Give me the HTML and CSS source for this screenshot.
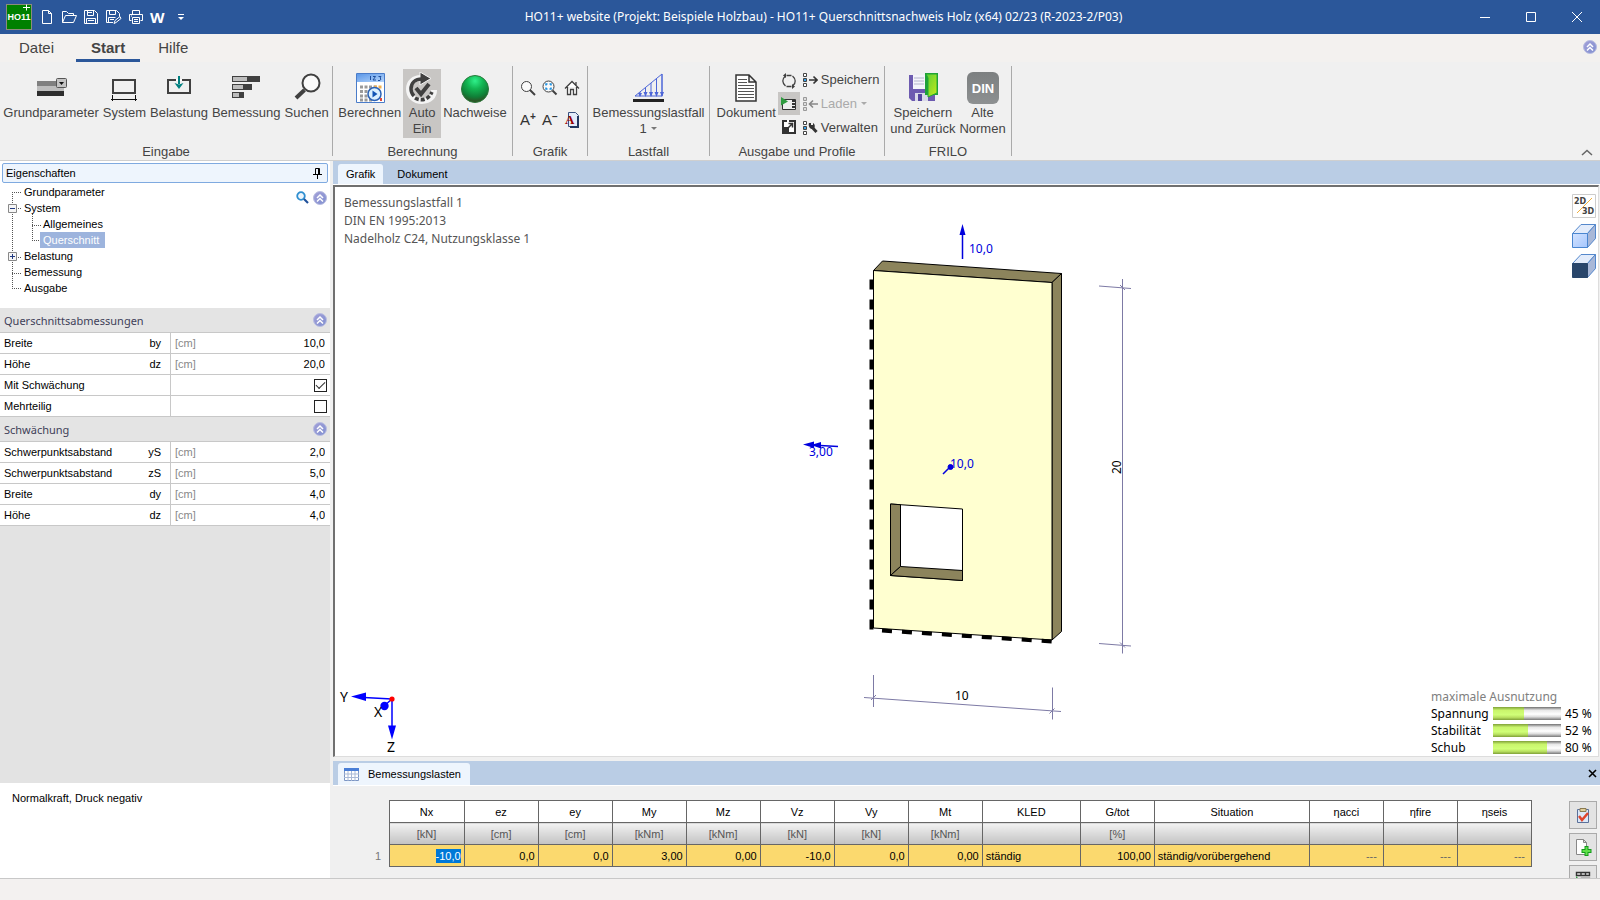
FILE: index.html
```html
<!DOCTYPE html>
<html lang="de">
<head>
<meta charset="utf-8">
<title>HO11+ Querschnittsnachweis Holz</title>
<link rel="stylesheet" href="styles.css">
</head>
<body>
<svg class="defs" aria-hidden="true">
  <defs>
    <linearGradient id="g-chev" x1="0" y1="0" x2="1" y2="1"><stop offset="0" stop-color="#a3a0d8"/><stop offset="1" stop-color="#7f8fd0"/></linearGradient>
    <radialGradient id="g-ball" cx=".5" cy=".2" r=".85"><stop offset="0" stop-color="#2ff08a"/><stop offset=".35" stop-color="#12b552"/><stop offset=".7" stop-color="#107f37"/><stop offset="1" stop-color="#3c3a1c"/></radialGradient>
    <linearGradient id="g-sky" x1="0" y1="0" x2="1" y2="1"><stop offset="0" stop-color="#5b97e8"/><stop offset="1" stop-color="#b5d5fb"/></linearGradient>
    <linearGradient id="g-cube" x1="0" y1="0" x2="1" y2="1"><stop offset="0" stop-color="#d3e3ff"/><stop offset="1" stop-color="#a5c6fd"/></linearGradient>
    <linearGradient id="g-din" x1="0" y1="0" x2="0" y2="1"><stop offset="0" stop-color="#7c7f80"/><stop offset="1" stop-color="#8d9091"/></linearGradient>
    <linearGradient id="g-door" x1="0" y1="0" x2="1" y2="1"><stop offset="0" stop-color="#58cf35"/><stop offset="1" stop-color="#c8ea1c"/></linearGradient>
    <symbol id="chev" viewBox="0 0 14 14">
      <circle cx="7" cy="7" r="6.5" fill="url(#g-chev)" stroke="#b9bde0"/>
      <path d="M4 7 7 4l3 3M4 10.5l3-3 3 3" fill="none" stroke="#fff" stroke-width="1.5"/>
    </symbol>
    <symbol id="list" viewBox="0 0 5 14">
      <path d="M.5.5h3v3h-3zM.5 10.5h3v3h-3z" fill="#fff" stroke="#444"/><path d="M.5 5.5h3v3h-3z" fill="#35a0e8" stroke="#444"/>
    </symbol>
  </defs>
</svg>

<header class="titlebar">
  <div class="quick">
    <svg class="logo" width="26" height="26" viewBox="0 0 26 26"><rect x=".5" y=".5" width="25" height="25" fill="#008000" stroke="#8c8c7c"/><text x="13" y="16" text-anchor="middle">HO11</text><path d="M17 3.500h7M20.500 0.500v6" stroke="#fff"/></svg>
    <button aria-label="Neu"><svg width="16" height="16" viewBox="0 0 16 16"><path d="M3.500 1.500h6l3 3v10h-9zM9.500 1.500v3h3"/></svg></button>
    <button aria-label="Öffnen"><svg width="16" height="16" viewBox="0 0 16 16"><path d="M1.500 13.500v-11h4l2 2h5v2M1.500 13.500l3-7h11l-3 7z"/></svg></button>
    <button aria-label="Speichern"><svg width="16" height="16" viewBox="0 0 16 16"><path d="M1.500 1.500h10l3 3v10h-13zM4.500 1.500v5h6v-5M3.500 14.500v-5h9v5M5 11.500h6M5 3.500h4"/></svg></button>
    <button aria-label="Speichern unter"><svg width="17" height="16" viewBox="0 0 17 16"><path d="M8 13.500H1.500v-12h10l3 3v3M4.500 1.500v4h6v-4M3.500 13.500v-5h7M5 10.500h4M9 14.500l1-3 5-4 1 2-5 4z"/></svg></button>
    <button aria-label="Drucken"><svg width="16" height="16" viewBox="0 0 16 16"><path d="M4.500 5.500v-4h7v4M3.500 11.500h-2v-6h13v6h-2M4.500 8.500h7v6h-7zM6 10.500h4M6 12.500h4M3 7h1"/></svg></button>
    <button class="word">W</button>
    <button class="more" aria-label="Anpassen"><svg width="8" height="8" viewBox="0 0 8 8"><path d="M1 1.500h6"/><path d="M1 4h6L4 7z" fill="#fff" stroke="none"/></svg></button>
  </div>
  <h1>HO11+ website (Projekt: Beispiele Holzbau) - HO11+ Querschnittsnachweis Holz (x64) 02/23 (R-2023-2/P03)</h1>
  <div class="winbtns">
    <button aria-label="Minimieren"><svg width="12" height="12" viewBox="0 0 12 12"><path d="M1 6.500h10"/></svg></button>
    <button aria-label="Maximieren"><svg width="12" height="12" viewBox="0 0 12 12"><path d="M1.500 1.500h9v9h-9z"/></svg></button>
    <button aria-label="Schließen"><svg width="12" height="12" viewBox="0 0 12 12"><path d="M1 1l10 10M11 1 1 11"/></svg></button>
  </div>
</header>

<nav class="menu">
  <button>Datei</button><button class="active">Start</button><button>Hilfe</button>
  <button class="help" aria-label="Einklappen"><svg width="14" height="14"><use href="#chev"/></svg></button>
</nav>

<section class="ribbon">
  <div class="group g-input">
    <div class="tools">
      <button class="tool"><svg width="32" height="32" viewBox="0 0 32 32"><path fill="#808080" d="M2 9h19v5H2z"/><path fill="#bdbdbd" d="M2 14h27v5H2z"/><path fill="#2e2e2e" d="M2 19h27v5H2z"/><rect x="21.500" y="6.500" width="10" height="9" rx="1" fill="#c4c4c4" stroke="#555"/><path d="M24 10h5l-2.500 3z" fill="#111"/></svg><span>Grundparameter</span></button>
      <button class="tool"><svg width="32" height="32" viewBox="0 0 32 32"><path fill="none" stroke="#404040" stroke-width="2" d="M5 8h22v13H5z"/><path stroke="#111" d="M3 27.500h26M4.500 23v6M27.500 23v6"/></svg><span>System</span></button>
      <button class="tool"><svg width="32" height="32" viewBox="0 0 32 32"><path fill="none" stroke="#404040" stroke-width="2" d="M5 8h22v13H5z"/><path fill="#fff" d="M13 7h6v2h-6z"/><path d="M16 4v8" stroke="#008080" stroke-width="2"/><path fill="#008080" d="M11.500 11 16 12.500 20.500 11 16 17z"/></svg><span>Belastung</span></button>
      <button class="tool"><svg width="32" height="32" viewBox="0 0 32 32"><path fill="#404040" d="M2 4h28v6H2zM2 12h20v6H2zM2 20h12v6H2z"/><path fill="#bdbdbd" d="M3 5h14v4H3zM3 13h10v4H3zM3 21h6v4H3z"/></svg><span>Bemessung</span></button>
      <button class="tool"><svg width="32" height="32" viewBox="0 0 32 32"><circle cx="20" cy="11" r="8.500" fill="#fafafa" stroke="#404040" stroke-width="2"/><path d="M13.500 18 5 26" stroke="#404040" stroke-width="4"/></svg><span>Suchen</span></button>
    </div>
    <h2>Eingabe</h2>
  </div>
  <div class="group g-calc">
    <div class="tools">
      <button class="tool"><svg width="32" height="32" viewBox="0 0 32 32"><path fill="#fff" stroke="#4a7cc9" d="M2.500 1.500h28v29h-28z"/><path fill="url(#g-sky)" d="M3 2h27v8H3z"/><path d="M16.500 4v4M19 4.500h2.500L19 8h3M24.500 4.500H27L26 6l1 1-1 1.500h-2" fill="none" stroke="#1e4f9e"/><path d="M6 15h17M6 19.500h11M6 24h11M6 28h13" stroke="#9a9a9a" stroke-width="3" stroke-dasharray="3 1.500"/><path d="M20 15h8" stroke="#f0b050" stroke-width="3" stroke-dasharray="3 1.500"/><circle cx="20.500" cy="22" r="6.500" fill="#d9f0ff" stroke="#2c62b5" stroke-width="1.500"/><path fill="#1155b5" d="M18.500 18.500v7l5-3.500z"/><path fill="#e04a3a" d="M26 26h2v3h-2z"/></svg><span>Berechnen</span></button>
      <button class="tool pressed"><svg width="32" height="32" viewBox="0 0 32 32"><path d="M15 6c-7 0-12 4-12 11s5 12 13 12 12-5 12-11" fill="none" stroke="#f4f4f4" stroke-width="6"/><path d="M14 0l11 6.500L14 13z" fill="#404040" stroke="#f4f4f4"/><path d="M16 7C9 7 5 11 5 17c0 3 1 5 3 7" fill="none" stroke="#404040" stroke-width="3.500"/><path d="M9 26c5 3 13 3 17-6" fill="none" stroke="#404040" stroke-width="3.500" stroke-dasharray="4 2"/><path d="M10 16l5 6 8-10" fill="none" stroke="#404040" stroke-width="4"/></svg><span>Auto<br>Ein</span></button>
      <button class="tool"><svg width="32" height="32" viewBox="0 0 32 32"><circle cx="16" cy="17" r="13.500" fill="url(#g-ball)" stroke="#2b7a3d"/></svg><span>Nachweise</span></button>
    </div>
    <h2>Berechnung</h2>
  </div>
  <div class="group g-graf">
    <div class="tools icons">
      <button aria-label="Zoom"><svg width="16" height="16" viewBox="0 0 16 16"><circle cx="6.500" cy="6.500" r="5" fill="#fafafa" stroke="#404040"/><path d="m10 10 5 5" stroke="#404040" stroke-width="2"/></svg></button>
      <button aria-label="Zoom Auswahl"><svg width="16" height="16" viewBox="0 0 16 16"><circle cx="6.500" cy="6.500" r="5.500" fill="#fafafa" stroke="#404040"/><path d="m10.500 10.500 4 4" stroke="#404040" stroke-width="2"/><path d="M4 5.500V4h1.500M7.500 4H9v1.500M9 7.500V9H7.500M5.500 9H4V7.500" fill="none" stroke="#188ee0" stroke-width="1.500"/></svg></button>
      <button aria-label="Gesamtansicht"><svg width="16" height="16" viewBox="0 0 16 16"><path d="M1 8.500 8 1.500l7 7M3.500 7v7.500h3v-5h3v5h3V7M12 5V2" fill="#fff" stroke="#404040" stroke-width="1.300"/></svg></button>
      <button class="font" aria-label="Schrift größer">A<sup>+</sup></button>
      <button class="font" aria-label="Schrift kleiner">A<sup>−</sup></button>
      <button class="redfont" aria-label="Schriftart"><svg width="16" height="16" viewBox="0 0 16 16"><path fill="#e3ecfa" stroke="#39507f" d="M4.500.5h7l3 3v11h-10z"/><path d="M14 4v11H6" fill="none" stroke="#20365f" stroke-width="2"/><text x="1" y="12">A</text></svg></button>
    </div>
    <h2>Grafik</h2>
  </div>
  <div class="group g-load">
    <div class="tools">
      <button class="tool"><svg width="32" height="32" viewBox="0 0 32 32"><path d="M0 28.500h31" stroke="#222" stroke-width="3"/><path d="M2 24 29 2v22zM29 2v22M23.500 7v17M18 11v13M12.500 16v8M7 20v4" fill="none" stroke="#4d66d8"/><path d="M27 20h4l-2 5zM21.500 20h4l-2 5zM16 20h4l-2 5zM10.500 20h4l-2 5zM5 21h4l-2 4z" fill="#4d66d8"/></svg><span>Bemessungslastfall<br>1 <i class="arr"></i></span></button>
    </div>
    <h2>Lastfall</h2>
  </div>
  <div class="group g-out">
    <div class="tools">
      <button class="tool"><svg width="32" height="32" viewBox="0 0 32 32"><path fill="#fff" stroke="#333" stroke-width="1.500" d="M6 3h13l7 7v19H6zM19 3v7h7"/><path d="M8 7.500h9M8 10.500h9M8 13.500h16M8 16.500h16M8 19.500h16M8 22.500h16M8 25.500h16" stroke="#555"/></svg><span>Dokument</span></button>
      <div class="mini">
        <button aria-label="Aktualisieren"><svg width="16" height="16" viewBox="0 0 16 16"><path d="M4 3.500C1 6 1 10 4.500 13M12 12.500C15 10 15 6 11.500 3M5.500 2.500h5M10.500 13.500h-5" fill="none" stroke="#404040" stroke-width="1.300"/><path fill="#404040" d="M5 0v5l-3-2.500zM11 16v-5l3 2.500z"/></svg></button>
        <button class="on" aria-label="Vorschau"><svg width="16" height="16" viewBox="0 0 16 16"><path d="M1.500 3.500h13v10h-13z" fill="#eee" stroke="#333"/><path d="M12.500 4v9" stroke="#333" stroke-width="3" stroke-dasharray="2 1"/><path fill="#2e9b3f" d="M0 1l7 4.500L0 9.500z"/></svg></button>
        <button aria-label="Öffnen in Fenster"><svg width="16" height="16" viewBox="0 0 16 16"><path d="M1 1h14v14H1z" fill="#fff"/><path d="M1 1h5v2H3v5H1zM1 8h7v7H1zM8 1h7v14H8v-2h5V3H8z" fill="#333"/><path d="M6 10l6-6M7.500 4.500h4v4" fill="none" stroke="#333" stroke-width="1.500"/></svg></button>
      </div>
      <div class="rows">
        <button><svg width="15" height="14" viewBox="0 0 15 14"><use href="#list" width="5" height="14"/><path d="M6 7h8M10.500 3.500 14 7l-3.500 3.500" fill="none" stroke="#333" stroke-width="1.600"/></svg>Speichern</button>
        <button disabled><svg width="15" height="14" viewBox="0 0 15 14"><path d="M.5.5h3v3h-3zM.5 5.500h3v3h-3zM.5 10.500h3v3h-3z" fill="#ddd" stroke="#999"/><path d="M15 7H6.500M10 3.500 6.500 7l3.500 3.500" fill="none" stroke="#888" stroke-width="1.600"/></svg>Laden <i class="arr"></i></button>
        <button><svg width="15" height="14" viewBox="0 0 15 14"><use href="#list" width="5" height="14"/><path d="m8 5 5.500 6" stroke="#333" stroke-width="3"/><path d="M6 2h2v2h2V2c3 2 2 6-1 6-2 0-4-3-3-6z" fill="#333"/></svg>Verwalten</button>
      </div>
    </div>
    <h2>Ausgabe und Profile</h2>
  </div>
  <div class="group g-frilo">
    <div class="tools">
      <button class="tool"><svg width="32" height="32" viewBox="0 0 32 32"><path fill="#6d5bb0" d="M2 3h26v26H5l-3-3z"/><path fill="#f4f4fa" d="M6 3h13v14H6z"/><path d="M7 6h10M7 9h10M7 12h10" stroke="#b4b4cc"/><path fill="#d9d9e8" d="M8 21h13v8H8z"/><path fill="#5545a0" d="M11 22h4v7h-4z"/><path fill="#1fa03a" d="M18 1h13v22H18z"/><path fill="url(#g-door)" d="m19 2 11 0v19l-9 4V6z" stroke="#23a832"/></svg><span>Speichern<br>und Zurück</span></button>
      <button class="tool"><svg class="din" width="32" height="32" viewBox="0 0 32 32"><rect width="32" height="32" rx="6" fill="url(#g-din)"/><text x="16" y="21" text-anchor="middle">DIN</text></svg><span>Alte<br>Normen</span></button>
    </div>
    <h2>FRILO</h2>
  </div>
  <button class="collapse" aria-label="Menüband reduzieren"><svg width="12" height="7" viewBox="0 0 12 7"><path d="m1 6 5-4.500L11 6" fill="none" stroke="#666" stroke-width="1.500"/></svg></button>
</section>

<main>
  <aside class="side">
    <div class="side-title"><span>Eigenschaften</span><svg width="9" height="11" viewBox="0 0 9 11"><path d="M2.500 6V.5h4V6M0 6.500h9M4.500 7v4M5.500 1v5" fill="none" stroke="#000"/></svg></div>
    <div class="tree">
      <svg class="lines" width="60" height="124" viewBox="0 0 60 124">
        <path d="M12.500 8v97M12 8.500h10M16 24.500h6M32.500 30v26M32 41.500h9M32 56.500h9M16 73.500h6M12 89.500h10M12 104.500h10" fill="none" stroke="#555" stroke-dasharray="1 1"/>
        <path d="M8.500 20.500h8v8h-8zM8.500 68.500h8v8h-8z" fill="#f6f6f6" stroke="#888"/><path d="M10 24.500h5M10 72.500h5M12.500 70v5" stroke="#223a80"/>
      </svg>
      <ul>
        <li><a href="#">Grundparameter</a></li>
        <li><a href="#">System</a><ul><li><a href="#">Allgemeines</a></li><li><a href="#" class="sel">Querschnitt</a></li></ul></li>
        <li><a href="#">Belastung</a></li>
        <li><a href="#">Bemessung</a></li>
        <li><a href="#">Ausgabe</a></li>
      </ul>
      <div class="tree-tools">
        <button aria-label="Suchen"><svg width="13" height="13" viewBox="0 0 13 13"><circle cx="5" cy="5" r="3.800" fill="#eef6fd" stroke="#2f8fd0" stroke-width="1.800"/><path d="m8 8 4 4" stroke="#1f4f9a" stroke-width="2.200"/></svg></button>
        <button aria-label="Alle zuklappen"><svg width="14" height="14"><use href="#chev"/></svg></button>
      </div>
    </div>
    <h3>Querschnittsabmessungen<svg width="14" height="14"><use href="#chev"/></svg></h3>
    <div class="prop"><label for="p1">Breite<b>by</b></label><i>[cm]</i><input id="p1" value="10,0"></div>
    <div class="prop"><label for="p2">Höhe<b>dz</b></label><i>[cm]</i><input id="p2" value="20,0"></div>
    <div class="prop"><label for="p3">Mit Schwächung</label><i></i><input id="p3" type="checkbox" checked></div>
    <div class="prop"><label for="p4">Mehrteilig</label><i></i><input id="p4" type="checkbox"></div>
    <h3>Schwächung<svg width="14" height="14"><use href="#chev"/></svg></h3>
    <div class="prop"><label for="p5">Schwerpunktsabstand<b>yS</b></label><i>[cm]</i><input id="p5" value="2,0"></div>
    <div class="prop"><label for="p6">Schwerpunktsabstand<b>zS</b></label><i>[cm]</i><input id="p6" value="5,0"></div>
    <div class="prop"><label for="p7">Breite<b>dy</b></label><i>[cm]</i><input id="p7" value="4,0"></div>
    <div class="prop"><label for="p8">Höhe<b>dz</b></label><i>[cm]</i><input id="p8" value="4,0"></div>
    <div class="filler"></div>
    <p class="hint">Normalkraft, Druck negativ</p>
  </aside>

  <div class="work">
    <div class="tabs"><button class="active">Grafik</button><button>Dokument</button></div>
    <div class="view">
      <svg class="scene" viewBox="335 187 1263 569" preserveAspectRatio="xMidYMid meet">
        <g stroke="#000" stroke-linejoin="round">
          <path fill="#8c845c" d="M873.500 270.500 882.500 261l179 12.500-9.500 9z"/>
          <path fill="#8c845c" d="M1052 282.500l9.500-9v358L1052 640z"/>
          <path fill="#ffffd0" d="M873.500 270.500 1052 282.500V640L873.500 628z"/>
          <path fill="#fff" d="M890.500 504l72 5v71.500l-72-5z"/>
          <path fill="#8c845c" d="M890.500 504l10 .7v61.800l-10 9z"/>
          <path fill="#8c845c" d="M890.500 575.500l10-9 62 4v10z"/>
        </g>
        <path d="M871.500 279.500V630" stroke="#000" stroke-width="4" stroke-dasharray="10 10"/>
        <path d="M882 630.500 1052 641.500" stroke="#000" stroke-width="4" stroke-dasharray="10 10"/>
        <g stroke="#7d7aa5" fill="none">
          <path d="M1122.500 279v374.500M1099 286l32 2.500M1099 643.500l32 2.500M1120 285l5 5M1120 642.500l5 5"/>
          <path d="M873.500 675v32M1052.500 687.500v32M864 697.500l197 14M871 700l5-5M1049.500 713.500l5-5"/>
        </g>
        <g stroke="#00d" fill="#00d">
          <path d="M962.500 259v-25M838 446.500l-27-1.500M943 474l7-7" stroke-width="1.500"/>
          <path stroke="none" d="M962.500 224l3 11h-6zM803 444.500l11-3v6.500zM811 445l10-3v6.500z"/>
          <circle cx="950.500" cy="467" r="2.500"/>
        </g>
        <g class="force"><text x="969" y="253">10,0</text><text x="809" y="456">3,00</text><text x="950" y="468">10,0</text></g>
        <g class="dim"><text x="955" y="700">10</text><text transform="translate(1121 474) rotate(-90)">20</text></g>
      </svg>
      <div class="case"><p>Bemessungslastfall 1</p><p>DIN EN 1995:2013</p><p>Nadelholz C24, Nutzungsklasse 1</p></div>
      <svg class="axes" width="67" height="70" viewBox="335 686 67 70">
        <path d="M392 699v28M392 699l-28-1.500M392 699l-8 7" stroke="#00f" stroke-width="1.500"/>
        <path fill="#00f" d="M351 696.500l15-4v8.500zM388 725.500h8l-4 14z"/><circle cx="384.500" cy="706" r="4.200" fill="#00f"/><circle cx="392" cy="699" r="2.600" fill="red"/>
        <text x="340" y="702">Y</text><text x="374" y="717">X</text><text x="387" y="752">Z</text>
      </svg>
      <div class="viewtools">
        <button aria-label="2D/3D"><svg width="24" height="24" viewBox="0 0 24 24"><path fill="#fff" stroke="#ccc" d="M.5.5h23v23H.5z"/><path d="M5 19 20 4" stroke="#f0b040"/><text x="2" y="10">2D</text><text x="10" y="20">3D</text></svg></button>
        <button aria-label="Würfel hell"><svg width="24" height="24" viewBox="0 0 24 24"><path fill="#e3ecfb" stroke="#5588cc" d="M.5 9.500 9 .5h14.500l-8 9z"/><path fill="#a9b8d8" stroke="#5588cc" d="m15.500 9.500 8-9v14l-8 9z"/><path fill="url(#g-cube)" stroke="#4a86d0" d="M.5 9.500h15v14H.5z"/></svg></button>
        <button aria-label="Würfel dunkel"><svg width="24" height="24" viewBox="0 0 24 24"><path fill="#e3ecfb" stroke="#5588cc" d="M.5 9.500 9 .5h14.500l-8 9z"/><path fill="#a9b8d8" stroke="#5588cc" d="m15.500 9.500 8-9v14l-8 9z"/><path fill="#29466b" stroke="#29466b" d="M.5 9.500h15v14H.5z"/></svg></button>
      </div>
      <div class="usage">
        <p>maximale Ausnutzung</p>
        <span>Spannung</span><div class="bar"><div style="width:45%"></div></div><span>45 %</span>
        <span>Stabilität</span><div class="bar"><div style="width:52%"></div></div><span>52 %</span>
        <span>Schub</span><div class="bar"><div style="width:80%"></div></div><span>80 %</span>
      </div>
    </div>

    <div class="tabs lower">
      <button class="active"><svg width="15" height="13" viewBox="0 0 15 13"><path fill="#fff" stroke="#7b95c4" d="M.5.5h14v12H.5z"/><path fill="#4a7ed6" d="M0 0h15v3H0z"/><path d="M4 3v10M7.500 3v10M11 3v10M0 6h15M0 9.500h15" stroke="#a9b9d6"/></svg>Bemessungslasten</button>
      <button class="close" aria-label="Schließen"><svg width="9" height="9" viewBox="0 0 9 9"><path d="m1 1 7 7M8 1 1 8" stroke="#000" stroke-width="1.600"/></svg></button>
    </div>
    <div class="loads">
      <table>
        <colgroup><col class="num"><col class="first"><col class="c" span="7"><col class="kled"><col class="c"><col class="sit"><col class="c" span="3"></colgroup>
        <thead>
          <tr><td></td><th>Nx</th><th>ez</th><th>ey</th><th>My</th><th>Mz</th><th>Vz</th><th>Vy</th><th>Mt</th><th>KLED</th><th>G/tot</th><th>Situation</th><th>ηacci</th><th>ηfire</th><th>ηseis</th></tr>
          <tr class="units"><td></td><th>[kN]</th><th>[cm]</th><th>[cm]</th><th>[kNm]</th><th>[kNm]</th><th>[kN]</th><th>[kN]</th><th>[kNm]</th><th></th><th>[%]</th><th></th><th></th><th></th><th></th></tr>
        </thead>
        <tbody>
          <tr><th scope="row">1</th><td><input aria-label="Nx" value="-10,0"></td><td>0,0</td><td>0,0</td><td>3,00</td><td>0,00</td><td>-10,0</td><td>0,0</td><td>0,00</td><td class="l">ständig</td><td>100,00</td><td class="l">ständig/vorübergehend</td><td class="d">---</td><td class="d">---</td><td class="d">---</td></tr>
        </tbody>
      </table>
      <div class="rowtools">
        <button aria-label="Prüfen"><svg width="16" height="16" viewBox="0 0 16 16"><path fill="#dce8f8" stroke="#5a7099" d="M2.500 2.500h11v13h-11z"/><path fill="#e3cf9a" stroke="#8a7a50" d="M5 1.500h6v3H5z"/><path d="m4 9 3 4 6-7" fill="none" stroke="#e0452c" stroke-width="2.500"/></svg></button>
        <button aria-label="Neue Zeile"><svg width="17" height="17" viewBox="0 0 17 17"><path fill="#fff" stroke="#888" d="M1.500.5h7l3 3v12h-10zM8.500.5v3h3"/><path d="M11.500 7v10M6.500 12h10" stroke="#149a1c" stroke-width="4"/><path d="M11.500 8v8M7.500 12h8" stroke="#5fe04a" stroke-width="2"/></svg></button>
        <button aria-label="Zeile einfügen"><svg width="16" height="16" viewBox="0 0 16 16"><path d="M1.500 1.500h13v3h-13zM6 1v4M10.500 1v4M6.500 7.500h8v3h-8z" fill="none" stroke="#333" stroke-width="1.400"/><path fill="#2e9b3f" d="M1 5l4 4-4 4z"/></svg></button>
      </div>
    </div>
  </div>
</main>
<footer></footer>
</body>
</html>
```
FILE: styles.css
```css
* { box-sizing: border-box; margin: 0; padding: 0; }
html, body { height: 100%; }
body { display: flex; flex-direction: column; overflow: hidden; background: #f0f0f0; font-family: "Liberation Sans", Arial, sans-serif; font-size: 13px; color: #444; }
button { font: inherit; color: inherit; background: none; border: 0; }
svg { display: block; flex: none; }
ul { list-style: none; }
.defs { position: absolute; width: 0; height: 0; }

.titlebar { display: grid; grid-template-columns: 1fr auto 1fr; align-items: center; height: 34px; flex: none; background: #2b579a; color: #fff; }
.titlebar h1 { font: 12px "Noto Sans", "Open Sans", sans-serif; padding-left: 47px; margin-bottom: 2px; white-space: nowrap; }
.quick { display: flex; align-items: center; gap: 6px; padding-left: 6px; }
.quick button svg, .winbtns svg { fill: none; stroke: #fff; }
.logo { margin-right: 1px; }
.logo text { font: bold 9px "Liberation Sans", sans-serif; fill: #fff; }
.word { font: bold 15px "Noto Sans", sans-serif; line-height: 20px; }
.quick .more { margin-left: 6px; }
.winbtns { display: flex; justify-content: flex-end; }
.winbtns button { display: grid; place-items: center; width: 46px; height: 34px; }

.menu { display: flex; height: 28px; flex: none; padding-left: 5px; background: #f3f1ef; font-size: 15px; }
.menu button { height: 28px; padding: 0 14px; border-bottom: 3px solid transparent; line-height: 27px; }
.menu button.active { font-weight: bold; margin: 0 4px 0 8px; padding: 0 15px; border-color: #2b579a; }
.menu button.help { margin-left: auto; padding: 0 3px; }

.ribbon { display: flex; height: 99px; flex: none; padding-top: 4px; border-bottom: 1px solid #cfcfcf; }
.group { display: flex; flex-direction: column; height: 90px; border-right: 1px solid #aaa; padding: 3px 2px 0; }
.group h2 { margin-top: auto; font-size: 13px; font-weight: normal; line-height: 16px; text-align: center; margin-bottom: -4px; }
.tools { display: flex; height: 69px; white-space: nowrap; justify-content: center; }
.tool { display: flex; flex-direction: column; align-items: center; padding: 3px 2px 0; line-height: 16px; }
.tool svg { margin-bottom: 1px; }
.tool.pressed { background: #c8c6c4; padding: 3px 3px 0; }
.g-input { width: 333px; }
.g-calc { width: 180px; }
.g-graf { width: 75px; }
.g-load { width: 122px; }
.g-out { width: 175px; }
.g-frilo { width: 127px; }
.icons { display: grid; grid-template-columns: repeat(3, 22px); grid-template-rows: 32px 32px; padding-top: 3px; place-items: center; }
.font { font-size: 15px; line-height: 16px; color: #333; }
.font sup { font-size: 10px; font-weight: bold; line-height: 0; vertical-align: 5px; }
.redfont text { font: bold 13px "Liberation Serif", serif; fill: #900; }
.arr { display: inline-block; border: 3px solid transparent; border-top-color: #777; border-bottom: 0; vertical-align: 3px; margin-left: 1px; }
.mini button { display: grid; place-items: center; width: 22px; height: 23px; }
.mini button.on { background: #c8c6c4; }
.mini { display: grid; align-content: start; row-gap: 0; }
.rows { display: grid; align-content: start; padding-left: 3px; }
.rows button { display: flex; align-items: center; gap: 3px; height: 24px; padding-bottom: 3px; }
.rows button:disabled { color: #aaa; }
.rows button:disabled .arr { border-top-color: #aaa; }
.din text { font: bold 13px "Liberation Sans", sans-serif; fill: #fff; }
.collapse { margin-left: auto; align-self: flex-end; padding: 4px 7px; }

main { display: flex; flex: 1; min-height: 0; font-size: 11px; color: #000; }
.side { display: flex; flex-direction: column; width: 330px; flex: none; background: #fff; }
.side-title { display: flex; align-items: center; justify-content: space-between; height: 20px; margin: 2px 2px 1px; padding: 0 5px 0 3px; border: 1px solid #7faae0; border-radius: 2px; background: #eef5fd; }
.tree { position: relative; display: flex; justify-content: space-between; height: 124px; }
.tree .lines { position: absolute; left: 0; top: 0; }
.tree ul { position: relative; padding-left: 23px; line-height: 16px; }
.tree ul ul { padding-left: 17px; }
.tree a { display: block; width: max-content; padding: 0 1px; color: #000; text-decoration: none; }
.tree ul ul a { padding: 0 6px 0 3px; }
.tree a.sel { background: #9db4dd; color: #fff; }
.tree-tools { display: flex; align-items: flex-start; gap: 4px; padding: 7px 3px; }
.side h3 { display: flex; align-items: center; justify-content: space-between; height: 25px; padding: 0 3px 0 4px; background: #e4e4e4; border-bottom: 1px solid #c8c8c8; font: 11px "Noto Sans", sans-serif; color: #404058; }
.prop { display: grid; grid-template-columns: 170px 1fr 60px; align-items: center; height: 21px; border-bottom: 1px solid #c8c8c8; }
.prop label { display: flex; justify-content: space-between; padding: 0 9px 0 4px; }
.prop b { font-weight: normal; }
.prop i { height: 20px; padding-left: 4px; border-left: 1px solid #c8c8c8; font-style: normal; line-height: 20px; color: #888; }
.prop input { width: 100%; border: 0; padding-right: 5px; font: inherit; text-align: right; background: none; outline: 0; }
.prop input[type=checkbox] { appearance: none; justify-self: end; width: 13px; height: 13px; margin-right: 3px; padding: 0; border: 1px solid #222; display: grid; place-items: center; }
.prop input:checked::after { content: ""; width: 8px; height: 4px; border: solid #333; border-width: 0 0 1px 1px; transform: rotate(-45deg) translate(1px, -1px); }
.filler { flex: 1; background: #e3e3e3; }
.hint { height: 95px; padding: 7px 12px; line-height: 16px; }

.work { display: flex; flex-direction: column; flex: 1; min-width: 0; margin-left: 3px; }
.tabs { display: flex; align-items: flex-end; height: 24px; flex: none; padding-left: 5px; background: #bacde5; border-bottom: 1px solid #fff; }
.tabs button { display: flex; align-items: center; gap: 9px; height: 20px; padding: 0 8px; margin-right: 6px; color: #000; }
.tabs button.active { background: #eef5fd; border-radius: 3px 3px 0 0; }
.tabs.lower { margin-top: 4px; height: 25px; }
.tabs.lower button { height: 22px; }
.tabs.lower .active { padding: 0 9px 0 6px; }
.tabs.lower .close { margin: 0 0 0 auto; padding: 0 3px 2px; }
.view { position: relative; flex: 1; min-height: 0; margin-right: 1px; background: #fff; border: solid #707070; border-width: 2px 0 0 2px; border-right: 1px solid #ddd; border-bottom: 1px solid #ddd; font-family: "Noto Sans", sans-serif; }
.scene { width: 100%; height: 100%; }
.scene text { font-size: 12px; }
.force { fill: #00d; }
.case { position: absolute; left: 9px; top: 7px; font-size: 12px; line-height: 18px; color: #555; }
.axes { position: absolute; left: 0; bottom: 0; }
.axes text { font-size: 14px; }
.viewtools { position: absolute; right: 2px; top: 7px; display: grid; gap: 6px; }
.viewtools text { font: bold 8px "DejaVu Sans", sans-serif; fill: #444; }
.usage { position: absolute; right: 4px; bottom: 0; display: grid; grid-template-columns: 62px 68px 33px; align-items: center; font-size: 12px; line-height: 17px; }
.usage p { grid-column: 1 / -1; color: #808080; }
.usage span:nth-of-type(2n) { padding-left: 4px; white-space: nowrap; }
.bar { height: 13px; background: linear-gradient(#707070, #e8e8e8 25%, #fff 55%, #ddd 75%, #777); }
.bar div { height: 100%; background: linear-gradient(#7fa038, #c9f56c 25%, #d0ff78 60%, #b8e060 80%, #7fa038); }

.loads { display: flex; justify-content: space-between; height: 92px; overflow: hidden; }
.loads table { margin: 14px 0 0 34px; border-collapse: collapse; table-layout: fixed; width: 1165px; height: 67px; }
.num { width: 22px; }
.first { width: 75px; }
.c { width: 74px; }
.kled { width: 98px; }
.sit { width: 155px; }
.loads tr { height: 22px; }
.loads th, .loads td { height: 22px; font-weight: normal; padding: 0 3px; }
.loads th + th, .loads td + th, .loads td { border: 1px solid #666; }
.loads thead td { border: 0; }
.loads thead th { background: #fff; }
.loads .units th { background: linear-gradient(#f2f2f2, #c2c2c2); color: #555; }
.loads tbody th { padding-left: 8px; color: #777; text-align: left; }
.loads tbody td { background: #fbd96e; text-align: right; }
.loads tbody .l { text-align: left; }
.loads tbody .d { padding-right: 6px; color: #666; }
.loads input { width: 25px; height: 14px; border: 0; background: #0078d7; color: #fff; font: inherit; text-align: right; display: block; margin-left: auto; }
.rowtools { display: grid; gap: 4px; align-content: start; padding: 15px 3px 0 0; }
.rowtools button { display: grid; place-items: center; width: 28px; height: 28px; border: 1px solid #aaa; background: #e3e3e3; }
footer { height: 22px; flex: none; background: #f3f1f0; border-top: 1px solid #c8c8c8; }
```
